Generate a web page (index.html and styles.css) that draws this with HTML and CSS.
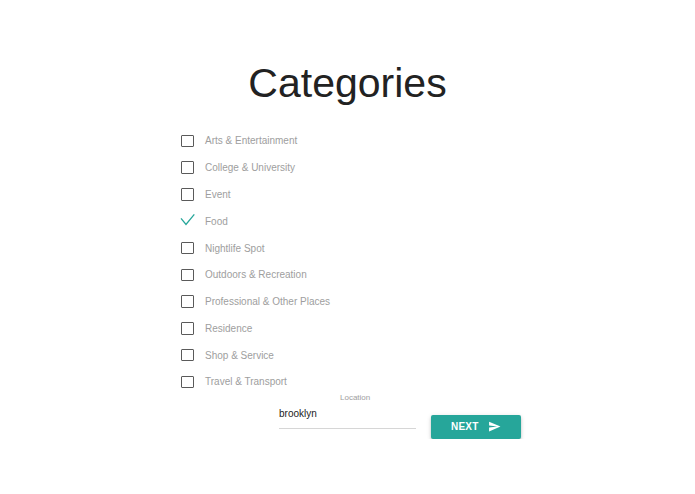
FILE: index.html
```html
<!DOCTYPE html>
<html>
<head>
<meta charset="utf-8">
<link rel="stylesheet" href="styles.css">
</head>
<body>
<main class="page">
  <h1 class="title">Categories</h1>
  <div class="content">
    <ul class="list">
      <li class="row"><span class="box"></span><span class="label">Arts &amp; Entertainment</span></li>
      <li class="row"><span class="box"></span><span class="label">College &amp; University</span></li>
      <li class="row"><span class="box"></span><span class="label">Event</span></li>
      <li class="row"><span class="box checked"><svg class="check" viewBox="0 0 16 16"><polyline points="1,5.3 6,11.5 14.3,1.3" fill="none" stroke="#26a69a" stroke-width="1.3"/></svg></span><span class="label">Food</span></li>
      <li class="row"><span class="box"></span><span class="label">Nightlife Spot</span></li>
      <li class="row"><span class="box"></span><span class="label">Outdoors &amp; Recreation</span></li>
      <li class="row"><span class="box"></span><span class="label">Professional &amp; Other Places</span></li>
      <li class="row"><span class="box"></span><span class="label">Residence</span></li>
      <li class="row"><span class="box"></span><span class="label">Shop &amp; Service</span></li>
      <li class="row"><span class="box"></span><span class="label">Travel &amp; Transport</span></li>
    </ul>
    <div class="form-row">
      <div class="field">
        <label class="field-label">Location</label>
        <div class="field-input">brooklyn</div>
      </div>
      <button class="btn">NEXT<svg class="send" viewBox="0 0 24 24"><path d="M2.01 21L23 12 2.01 3 2 10l15 2-15 2z" fill="#fff"/></svg></button>
    </div>
  </div>
</main>
</body>
</html>
```
FILE: styles.css
```css
html, body {
  margin: 0;
  padding: 0;
  background: #fff;
  font-family: "Liberation Sans", Arial, sans-serif;
}
.page {
  padding-top: 62.7px;
}
.title {
  margin: 0;
  text-align: center;
  font-size: 41px;
  line-height: 41px;
  font-weight: 400;
  color: #222;
}
.content {
  margin-top: 23.9px;
  padding-left: 181px;
}
.list {
  list-style: none;
  margin: 0;
  padding: 0;
}
.row {
  height: 26.78px;
  display: flex;
  align-items: center;
}
.box {
  width: 12.5px;
  height: 12.5px;
  box-sizing: border-box;
  border: 1.5px solid #5a5a5a;
  border-radius: 1px;
  position: relative;
  flex: none;
}
.box.checked {
  border-color: transparent;
}
.check {
  position: absolute;
  left: -2px;
  top: -3.4px;
  width: 16px;
  height: 16px;
}
.label {
  margin-left: 11.5px;
  font-size: 10px;
  color: #9e9e9e;
}
.form-row {
  display: flex;
  align-items: flex-start;
  margin-left: 98px;
  gap: 15px;
}
.field {
  width: 137px;
}
.field-label {
  display: block;
  font-size: 8px;
  line-height: 6px;
  height: 6px;
  color: #9e9e9e;
  padding-left: 61px;
}
.field-input {
  margin-top: 5.6px;
  font-size: 10px;
  line-height: 14px;
  color: #222;
  padding-bottom: 7px;
  border-bottom: 1.5px solid #d6d6d6;
}
.btn {
  margin-top: 19.6px;
  width: 90px;
  height: 24px;
  box-sizing: border-box;
  padding: 0 20px;
  border: none;
  border-radius: 2px;
  background: #26a69a;
  color: #fff;
  font-family: "Liberation Sans", Arial, sans-serif;
  font-size: 10px;
  font-weight: 700;
  letter-spacing: 0.2px;
  display: flex;
  align-items: center;
  justify-content: space-between;
  box-shadow: 0 2px 3px rgba(0,0,0,0.16), 0 1px 5px rgba(0,0,0,0.12);
}
.send {
  width: 13px;
  height: 13px;
}
```
